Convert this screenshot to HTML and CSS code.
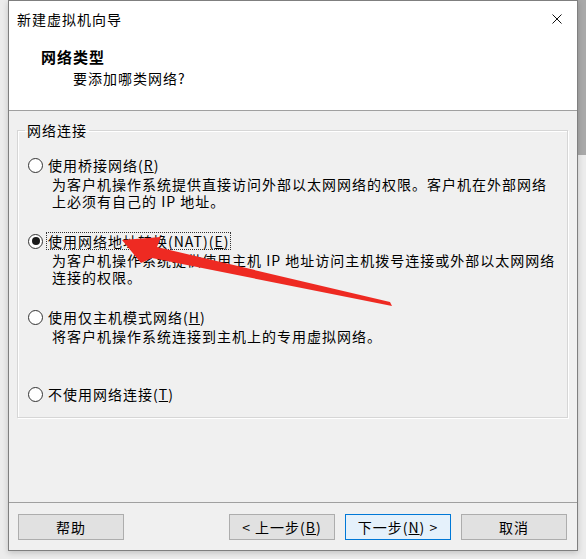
FILE: index.html
```html
<!DOCTYPE html>
<html lang="zh-CN">
<head>
<meta charset="utf-8">
<title>新建虚拟机向导</title>
<link rel="stylesheet" href="styles.css">
</head>
<body>
<div class="window">
  <div class="titlebar">
    <span class="title">新建虚拟机向导</span>
    <svg class="close" width="10" height="10" viewBox="0 0 10 10"><path d="M0.5 0.5L9.5 9.5M9.5 0.5L0.5 9.5" stroke="#111" stroke-width="1" fill="none"/></svg>
  </div>
  <div class="header">
    <div class="header-title">网络类型</div>
    <div class="header-sub">要添加哪类网络?</div>
  </div>
  <div class="content">
    <fieldset class="group">
      <legend class="group-legend">网络连接</legend>
      <div class="options">
        <div class="option">
          <div class="option-row"><span class="radio"></span><span class="option-label">使用桥接网络(<u>R</u>)</span></div>
          <div class="option-desc">为客户机操作系统提供直接访问外部以太网网络的权限。客户机在外部网络<br>上必须有自己的 IP 地址。</div>
        </div>
        <div class="option">
          <div class="option-row"><span class="radio radio--checked"></span><span class="option-label option-label--focus">使用网络地址转换(NAT)(<u>E</u>)</span></div>
          <div class="option-desc">为客户机操作系统提供使用主机 IP 地址访问主机拨号连接或外部以太网网络<br>连接的权限。</div>
        </div>
        <div class="option">
          <div class="option-row"><span class="radio"></span><span class="option-label">使用仅主机模式网络(<u>H</u>)</span></div>
          <div class="option-desc">将客户机操作系统连接到主机上的专用虚拟网络。</div>
        </div>
        <div class="option option--spaced">
          <div class="option-row"><span class="radio"></span><span class="option-label">不使用网络连接(<u>T</u>)</span></div>
        </div>
      </div>
    </fieldset>
  </div>
  <div class="footer">
    <button class="btn">帮助</button>
    <div class="spacer"></div>
    <button class="btn">&lt; 上一步(<u>B</u>)</button>
    <button class="btn btn--default">下一步(<u>N</u>) &gt;</button>
    <button class="btn">取消</button>
  </div>
</div>
<svg class="annotation" width="586" height="559" viewBox="0 0 586 559">
  <polygon points="122,240 161,237 157,247 390,302 392,306 152,258 141,263" fill="#ee2a22"/>
</svg>
</body>
</html>
```

FILE: styles.css
```css
html, body {
  margin: 0;
  padding: 0;
}
body {
  width: 586px;
  height: 559px;
  overflow: hidden;
  position: relative;
  background:
    linear-gradient(#a9a9a9, #a9a9a9) right top / 9px 155px no-repeat,
    #ececec;
  font-family: "Noto Sans CJK SC", "Noto Sans", sans-serif;
  font-size: 14px;
  letter-spacing: 1px;
  color: #000;
}
.window {
  margin-left: 8px;
  width: 570px;
  height: 551px;
  box-sizing: border-box;
  border: 1px solid #7f7f7f;
  background: #f0f0f0;
  display: flex;
  flex-direction: column;
  box-shadow: 0 2px 6px rgba(0,0,0,0.18);
}
.titlebar {
  height: 36px;
  flex: none;
  background: #fff;
  display: flex;
  align-items: center;
  padding: 0 15px 0 8px;
}
.title {
  flex: 1;
  line-height: 20px;
}
.close {
  display: block;
}
.header {
  flex: none;
  background: #fff;
  padding: 10px 0 22px 0;
  border-bottom: 1px solid #a0a0a0;
}
.header-title {
  padding-left: 32px;
  font-weight: bold;
  font-size: 15px;
  line-height: 20px;
}
.header-sub {
  padding-left: 64px;
  margin-top: 1px;
  line-height: 20px;
}
.content {
  flex: 1;
}
.group {
  margin: 9px 9px 0 8px;
  padding: 15px 0 13px 0;
  border: 1px solid #d6d6d6;
  box-shadow: 1px 1px 0 #fff, inset 1px 1px 0 #fff;
}
.group-legend {
  margin-left: 7px;
  padding: 0 2px;
  line-height: 20px;
}
.options {
  display: flex;
  flex-direction: column;
  gap: 21px;
  padding-left: 10px;
}
.option--spaced {
  margin-top: 18px;
}
.option-row {
  height: 20px;
  display: flex;
  align-items: center;
}
.radio {
  width: 15px;
  height: 15px;
  box-sizing: border-box;
  border: 1px solid #333;
  border-radius: 50%;
  background: #fff;
  margin-right: 3px;
  display: flex;
  align-items: center;
  justify-content: center;
  flex: none;
}
.radio--checked::after {
  content: "";
  width: 8px;
  height: 8px;
  border-radius: 50%;
  background: #1a1a1a;
}
.option-label {
  border: 1px dotted transparent;
  padding: 0 1px;
  line-height: 16px;
  white-space: nowrap;
}
.option-label--focus {
  border-color: #333;
}
.option-desc {
  margin-top: 1px;
  padding-left: 24px;
  line-height: 17px;
  white-space: nowrap;
}
.footer {
  flex: none;
  border-top: 1px solid #a0a0a0;
  padding: 11px 10px 10px 9px;
  display: flex;
  gap: 10px;
}
.spacer {
  flex: 1;
}
.btn {
  width: 106px;
  height: 26px;
  box-sizing: border-box;
  border: 1px solid #adadad;
  background: #e1e1e1;
  font-family: inherit;
  font-size: 14px;
  letter-spacing: 1px;
  color: #000;
  padding: 0;
  line-height: 22px;
}
.btn--default {
  border-color: #0078d7;
  background: #e5f1fb;
}
.annotation {
  position: absolute;
  left: 0;
  top: 0;
  pointer-events: none;
}
```
